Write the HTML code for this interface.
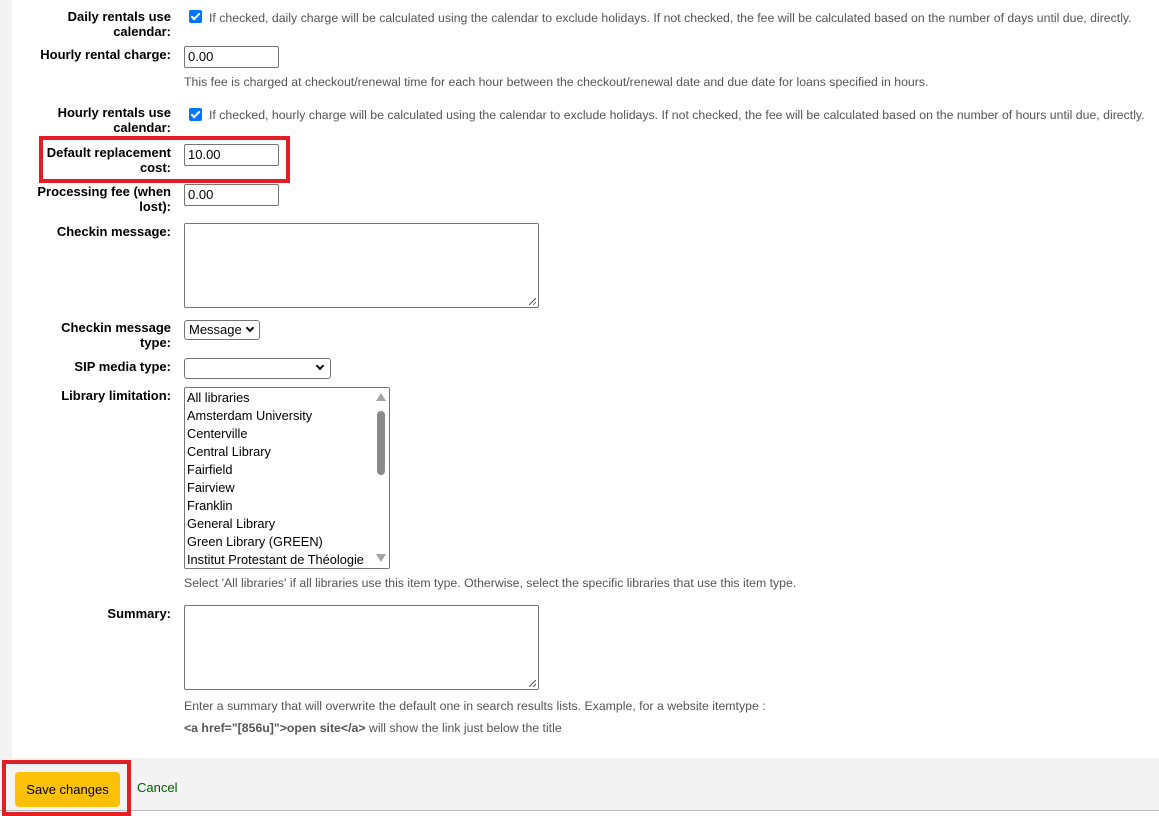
<!DOCTYPE html>
<html><head><meta charset="utf-8"><style>
*{box-sizing:border-box}
body{margin:0;width:1159px;height:816px;position:relative;background:#fff;font-family:"Liberation Sans",sans-serif;font-size:13px;color:#000;overflow:hidden}
.a{position:absolute}
.lbl{position:absolute;right:988px;text-align:right;font-weight:bold;font-size:13px;line-height:15px;color:#000}
.hint{position:absolute;left:184px;font-size:12.3px;color:#555;white-space:nowrap}
.inp{position:absolute;left:184px;width:95px;height:22px;border:1px solid #767676;border-radius:2px;font-size:13px;padding:3px 3px;line-height:14px}
.cb{position:absolute;left:189px;width:13px;height:13px;background:#0075ff;border-radius:2px}
.cb:after{content:"";position:absolute;left:4px;top:1px;width:3px;height:7px;border:solid #fff;border-width:0 2px 2px 0;transform:rotate(45deg)}
.ta{position:absolute;left:184px;width:355px;height:85px;border:1px solid #767676;border-radius:2px}
.ta:after{content:"";position:absolute;right:2px;bottom:2px;width:7px;height:7px;background:linear-gradient(135deg,transparent 45%,#555 45%,#555 55%,transparent 55%,transparent 75%,#555 75%,#555 85%,transparent 85%)}
.sel{position:absolute;left:184px;border:1px solid #767676;border-radius:3px;height:20px;font-size:13px;padding:1px 4px;line-height:16px}
.chev{position:absolute;right:5px;top:5px;width:6px;height:6px;border:solid #000;border-width:0 2px 2px 0;transform:rotate(45deg)}
</style></head><body>
<div class="a" style="left:0;top:0;width:12px;height:758px;background:#f3f3f3"></div>

<div class="lbl" style="top:9px">Daily rentals use<br>calendar:</div>
<div class="cb" style="top:10px"></div>
<div class="hint" style="left:209px;top:11px">If checked, daily charge will be calculated using the calendar to exclude holidays. If not checked, the fee will be calculated based on the number of days until due, directly.</div>

<div class="lbl" style="top:47px">Hourly rental charge:</div>
<div class="inp" style="top:46px">0.00</div>
<div class="hint" style="top:75px">This fee is charged at checkout/renewal time for each hour between the checkout/renewal date and due date for loans specified in hours.</div>

<div class="lbl" style="top:105px">Hourly rentals use<br>calendar:</div>
<div class="cb" style="top:108px"></div>
<div class="hint" style="left:209px;top:108px">If checked, hourly charge will be calculated using the calendar to exclude holidays. If not checked, the fee will be calculated based on the number of hours until due, directly.</div>

<div class="a" style="left:39px;top:136px;width:251px;height:47px;border:4px solid #e31e24"></div>
<div class="lbl" style="top:145px">Default replacement<br>cost:</div>
<div class="inp" style="top:144px">10.00</div>

<div class="lbl" style="top:184px">Processing fee (when<br>lost):</div>
<div class="inp" style="top:184px">0.00</div>

<div class="lbl" style="top:224px">Checkin message:</div>
<div class="ta" style="top:223px"></div>

<div class="lbl" style="top:320px">Checkin message<br>type:</div>
<div class="sel" style="top:320px;width:76px">Message<span class="chev" style="right:6px;top:4px"></span></div>

<div class="lbl" style="top:359px">SIP media type:</div>
<div class="sel" style="top:358px;width:147px;height:21px"><span class="chev" style="right:7px;top:4px"></span></div>

<div class="lbl" style="top:388px">Library limitation:</div>
<div class="a" style="left:184px;top:387px;width:206px;height:182px;border:1px solid #767676;border-radius:2px;overflow:hidden;font-size:12.8px;line-height:18px;padding:1px 0 0 2px;white-space:nowrap">
All libraries<br>Amsterdam University<br>Centerville<br>Central Library<br>Fairfield<br>Fairview<br>Franklin<br>General Library<br>Green Library (GREEN)<br>Institut Protestant de Théologie
<div class="a" style="right:0;top:0;width:15px;height:180px;background:#fff"></div>
<div class="a" style="right:3px;top:5px;width:0;height:0;border-left:5px solid transparent;border-right:5px solid transparent;border-bottom:8px solid #a3a3a3"></div>
<div class="a" style="right:4px;top:23px;width:8px;height:64px;background:#8a8a8a;border-radius:4px"></div>
<div class="a" style="right:3px;bottom:6px;width:0;height:0;border-left:5px solid transparent;border-right:5px solid transparent;border-top:8px solid #a3a3a3"></div>
</div>
<div class="hint" style="top:576px">Select 'All libraries' if all libraries use this item type. Otherwise, select the specific libraries that use this item type.</div>

<div class="lbl" style="top:606px">Summary:</div>
<div class="ta" style="top:605px"></div>
<div class="hint" style="top:699px">Enter a summary that will overwrite the default one in search results lists. Example, for a website itemtype :</div>
<div class="hint" style="top:721px"><b>&lt;a href="[856u]"&gt;open site&lt;/a&gt;</b> will show the link just below the title</div>

<div class="a" style="left:0;top:758px;width:1159px;height:53px;background:#f3f3f3;border-bottom:1px solid #bbb"></div>
<div class="a" style="left:15px;top:772px;width:105px;height:35px;background:#fcc106;border-radius:4px;font-size:13px;text-align:center;line-height:36px">Save changes</div>
<div class="a" style="left:137px;top:780px;color:#006100;font-size:13px">Cancel</div>
<div class="a" style="left:2px;top:760px;width:129px;height:56px;border:4px solid #e31e24"></div>
</body></html>
